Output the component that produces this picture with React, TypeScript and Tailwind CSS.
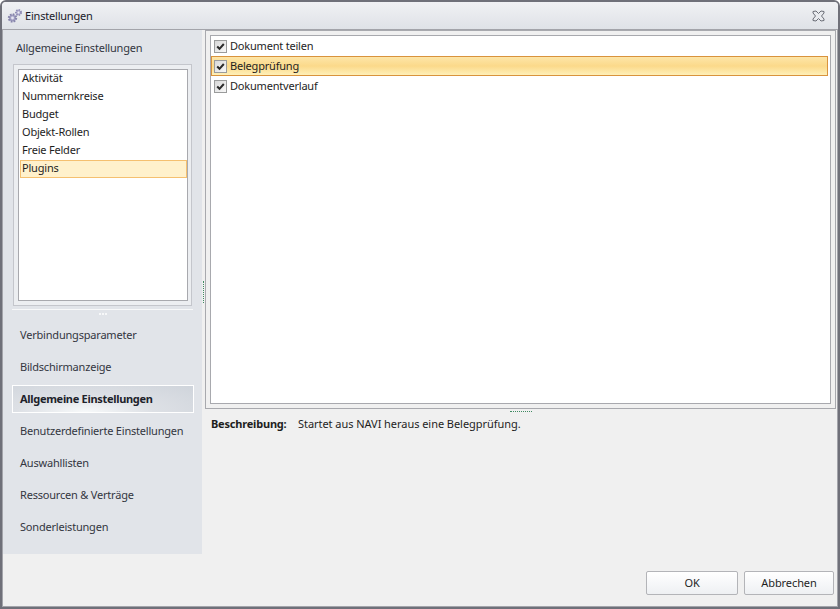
import React from "react";

const font = "font-['Noto_Sans',sans-serif] text-[11px] leading-[18px] tracking-[-0.2px]";

const listItems = ["Aktivität", "Nummernkreise", "Budget", "Objekt-Rollen", "Freie Felder"];
const navItems = ["Verbindungsparameter", "Bildschirmanzeige", "Allgemeine Einstellungen", "Benutzerdefinierte Einstellungen", "Auswahllisten", "Ressourcen & Verträge", "Sonderleistungen"];
const plugins = ["Dokument teilen", "Belegprüfung", "Dokumentverlauf"];

const Gears = () => (
  <svg width="16" height="16" viewBox="0 0 16 16" className="shrink-0">
    <circle cx="5.5" cy="10" r="3.6" fill="#a3a1c4" stroke="#8785ab" strokeWidth="2.2" strokeDasharray="1.6 1.2" />
    <circle cx="5.5" cy="10" r="1.4" fill="#e6e6f2" />
    <circle cx="11.5" cy="4.5" r="2.6" fill="#b4b2d2" stroke="#8f8cb4" strokeWidth="1.8" strokeDasharray="1.4 1" />
    <circle cx="11.5" cy="4.5" r="1" fill="#eeeef6" />
  </svg>
);

const CloseIcon = () => (
  <svg width="13" height="12" viewBox="0 0 13 12">
    <path d="M1 1.5 L4 1 L6.5 3.5 L9 1 L12 1.5 L12 3 L9.5 6 L12 9 L12 10.5 L9 11 L6.5 8.5 L4 11 L1 10.5 L1 9 L3.5 6 L1 3 Z" fill="#e8eaee" stroke="#6a6d76" strokeWidth="1" />
  </svg>
);

const Check = () => (
  <span className="w-[13px] h-[13px] shrink-0 flex items-center justify-center border border-[#9a9b9b] bg-gradient-to-br from-[#d8d8d8] to-[#f8f8f8]">
    <svg width="9" height="9" viewBox="0 0 9 9">
      <path d="M1.2 4.5 L3.5 6.8 L7.8 2" fill="none" stroke="#2b2b2b" strokeWidth="2" />
    </svg>
  </span>
);

const App = () => {
  return (
    <div className={`${font} w-[840px] h-[609px] bg-white text-[#1e1e1e]`}>
      <div className="w-full h-full flex flex-col rounded-t-[6px] border-2 border-[#6f7079] bg-[#f0f0f0]">
        <div className="h-[27px] shrink-0 flex items-center pl-[5px] pr-[13px] gap-[2px] rounded-t-[4px] bg-gradient-to-b from-[#f0f1f4] to-[#dfe2e7]">
          <Gears />
          <span className="flex-1 text-[#1a1a2a]">Einstellungen</span>
          <CloseIcon />
        </div>
        <div className="flex-1 flex border border-[#a3a4aa] min-h-0">
          <div className="w-[199px] shrink-0 h-[524px] bg-[#e1e4e9] flex flex-col">
            <div className="h-[34px] shrink-0 flex items-center pt-[2px] pl-[13px] text-[#33363f]">Allgemeine Einstellungen</div>
            <div className="mx-[10px] h-[242px] shrink-0 border border-[#c4c6cc] bg-[#eceef1] pl-[4px] pr-[3px] py-[4px]">
              <div className="h-full border border-[#a8a9ae] bg-white pl-px">
                {listItems.map((t) => (
                  <div key={t} className="h-[18px] pl-[2px] pb-[2px] flex items-center">{t}</div>
                ))}
                <div className="h-[18px] pl-[1px] pb-[2px] flex items-center border border-[#f5c070] bg-[#fff1cc]">Plugins</div>
              </div>
            </div>
            <div className="mt-[3px] mx-[9px] h-[10px] shrink-0 border-t border-[#f7f8f9] flex justify-center pt-[3px]">
              <div className="flex gap-px">
                <span className="w-[2px] h-[2px] bg-[#f7f8f9]" />
                <span className="w-[2px] h-[2px] bg-[#f7f8f9]" />
                <span className="w-[2px] h-[2px] bg-[#f7f8f9]" />
              </div>
            </div>
            <div className="flex flex-col pl-[9px] pr-[8px]">
              {navItems.map((t) =>
                t === "Allgemeine Einstellungen" ? (
                  <div key={t} className="h-[28px] my-[2px] pl-[7px] flex items-center font-bold tracking-[-0.3px] border border-white bg-[radial-gradient(ellipse_at_40%_100%,#f7f9fa_0%,#dde0e5_45%,#cfd4db_100%)] text-[#20222a]">{t}</div>
                ) : (
                  <div key={t} className="h-[32px] pl-[8px] flex items-center text-[#33363f]">{t}</div>
                )
              )}
            </div>
          </div>
          <div className="w-[3px] shrink-0 h-[524px] flex flex-col justify-center bg-[#f0f0f0]">
            <div className="w-[2px] h-[22px] ml-px border-l border-dotted border-[#3f8a62]" />
          </div>
          <div className="flex-1 flex flex-col min-w-0 pr-[1px]">
            <div className="h-[379px] shrink-0 border border-[#a8a9ae] bg-[#f0f0f0] p-[4px]">
              <div className="h-full border border-[#a8a9ae] bg-white pt-px pr-[2px] flex flex-col">
                <div className="h-[18px] pl-[3px] flex items-center gap-[3px]"><Check />{plugins[0]}</div>
                <div className="h-[20px] mt-px pl-[2px] flex items-center gap-[3px] border border-[#d9933d] bg-gradient-to-b from-[#fde6a8] via-[#fbd98a] to-[#fef0b8]"><Check />{plugins[1]}</div>
                <div className="h-[18px] mt-px pl-[3px] flex items-center gap-[3px]"><Check />{plugins[2]}</div>
              </div>
            </div>
            <div className="h-[4px] shrink-0 flex justify-center">
              <div className="w-[22px] h-[1px] mt-[2px] border-t border-dotted border-[#3f8a62]" />
            </div>
            <div className="pt-[2px] pl-[6px] flex">
              <span className="w-[87px] font-bold">Beschreibung:</span>
              <span className="tracking-[-0.05px]">Startet aus NAVI heraus eine Belegprüfung.</span>
            </div>
            <div className="flex-1" />
            <div className="flex justify-end gap-[6px] pr-[2px] pb-[11px] tracking-[-0.1px]">
              <button className="w-[92px] h-[24px] rounded-[2px] border border-[#b3b4b8] bg-gradient-to-b from-white to-[#eef0f3]">OK</button>
              <button className="w-[90px] h-[24px] rounded-[2px] border border-[#b3b4b8] bg-gradient-to-b from-white to-[#eef0f3]">Abbrechen</button>
            </div>
          </div>
        </div>
      </div>
    </div>
  );
};

export default App;
